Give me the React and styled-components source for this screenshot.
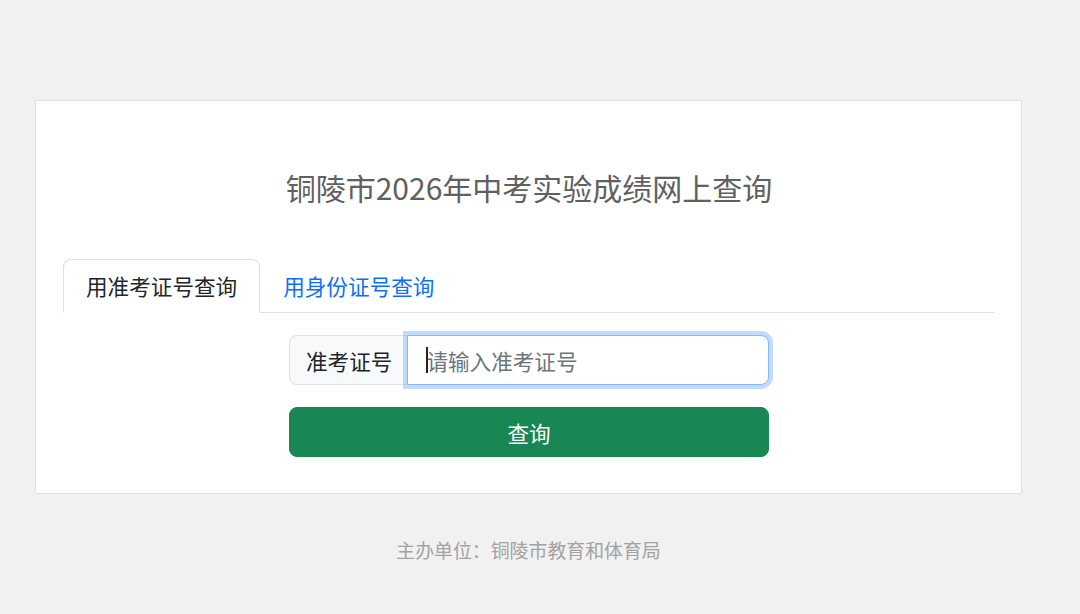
import React from 'react'
import styled, { createGlobalStyle } from 'styled-components'

const GlobalStyle = createGlobalStyle`
  html, body {
    margin: 0;
    padding: 0;
    background: #f1f1f1;
    font-family: "Noto Sans CJK SC", "Noto Sans", sans-serif;
    color: #212529;
  }
  * { box-sizing: border-box; }
`

const App = () => {
  return (
    <>
      <GlobalStyle />
      <Page>
        <Card>
          <Title>铜陵市2026年中考实验成绩网上查询</Title>
          <Tabs>
            <Tab active>用准考证号查询</Tab>
            <Tab>用身份证号查询</Tab>
          </Tabs>
          <Form>
            <InputGroup>
              <GroupLabel>准考证号</GroupLabel>
              <InputWrap>
                <Caret />
                <TextInput placeholder='请输入准考证号' />
              </InputWrap>
            </InputGroup>
            <SubmitButton>查询</SubmitButton>
          </Form>
        </Card>
        <Footer>主办单位：铜陵市教育和体育局</Footer>
      </Page>
    </>
  )
}

const Page = styled.div`
  width: 987px;
  margin: 0 0 0 35px;
  padding-top: 100px;
`

const Card = styled.div`
  background: #fff;
  border: 1px solid #e2e2e2;
  padding: 66px 26px 36px 27px;
`

const Title = styled.h3`
  margin: 0;
  text-align: center;
  font-size: 30px;
  font-weight: 400;
  line-height: 40px;
  color: #606060;
`

const Tabs = styled.div`
  display: flex;
  margin-top: 52px;
  border-bottom: 1px solid #dee2e6;
`

const Tab = styled.div`
  margin-bottom: -1px;
  padding: 10px 22px;
  font-size: 21.6px;
  line-height: 32px;
  border: 1px solid ${p => (p.active ? '#dee2e6' : 'transparent')};
  border-bottom-color: ${p => (p.active ? '#fff' : 'transparent')};
  border-radius: 8px 8px 0 0;
  background: ${p => (p.active ? '#fff' : 'transparent')};
  color: ${p => (p.active ? '#212529' : '#0d6efd')};
  cursor: pointer;
`

const Form = styled.div`
  width: 480px;
  margin: 22px auto 0;
  display: flex;
  flex-direction: column;
  gap: 22px;
`

const InputGroup = styled.div`
  display: flex;
  height: 50px;
`

const GroupLabel = styled.span`
  display: flex;
  align-items: center;
  padding: 0 15px 0 16px;
  font-size: 21.6px;
  color: #212529;
  background: #f8f9fa;
  border: 1px solid #dee2e6;
  border-right: none;
  border-radius: 8px 0 0 8px;
`

const InputWrap = styled.div`
  flex: 1;
  position: relative;
  display: flex;
`

const Caret = styled.span`
  position: absolute;
  left: 19px;
  top: 12px;
  width: 1.5px;
  height: 26px;
  background: #222;
`

const TextInput = styled.input`
  flex: 1;
  min-width: 0;
  padding: 0 18px;
  font-family: inherit;
  font-size: 21.6px;
  color: #212529;
  background: #fff;
  border: 1px solid #86b7fe;
  border-radius: 0 8px 8px 0;
  box-shadow: 0 0 0 4px rgba(13, 110, 253, 0.25);
  outline: none;

  &::placeholder {
    color: #6c757d;
  }
`

const SubmitButton = styled.button`
  height: 50px;
  font-family: inherit;
  font-size: 21.6px;
  color: #fff;
  background: #198754;
  border: 1px solid #198754;
  border-radius: 8px;
  cursor: pointer;
`

const Footer = styled.div`
  margin-top: 42px;
  text-align: center;
  font-size: 18.9px;
  line-height: 28px;
  color: #a2a2a2;
`

export default App
